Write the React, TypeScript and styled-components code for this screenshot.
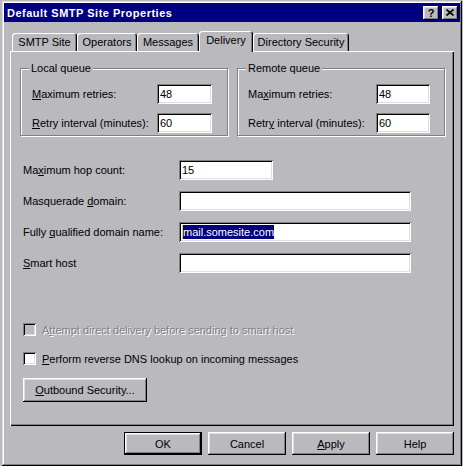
import styled, { createGlobalStyle } from "styled-components";

const face = "#bab9be";
const shadow = "#808080";
const light = "#dfdfdf";

const GlobalStyle = createGlobalStyle`
  html, body {
    margin: 0;
    padding: 0;
    background: ${face};
    overflow: hidden;
  }
  body {
    font-family: "Liberation Sans", Arial, sans-serif;
    font-size: 11px;
    color: #000;
  }
`;

const raised = `inset -1px -1px #000, inset 1px 1px #fff, inset -2px -2px ${shadow}, inset 2px 2px ${light}`;
const sunken = `inset 1px 1px ${shadow}, inset -1px -1px #fff, inset 2px 2px #000, inset -2px -2px ${light}`;

const Window = styled.div`
  box-sizing: border-box;
  margin: 1px 0 0 2px;
  width: 460px;
  height: 465px;
  padding: 2px;
  background: ${face};
  box-shadow: inset -1px -1px #000, inset 1px 1px ${light}, inset -2px -2px ${shadow}, inset 2px 2px #fff;
  display: flex;
  flex-direction: column;
`;

const TitleBar = styled.div`
  height: 19px;
  background: #000080;
  padding: 0 2px 0 3px;
  display: flex;
  align-items: center;
  justify-content: space-between;
`;

const TitleText = styled.span`
  color: #fff;
  font-weight: bold;
  font-size: 11px;
  letter-spacing: 0.5px;
`;

const TitleButtons = styled.div`
  display: flex;
  gap: 3px;
`;

const TitleButton = styled.div`
  box-sizing: border-box;
  width: 16px;
  height: 14px;
  background: ${face};
  box-shadow: ${raised};
  display: flex;
  align-items: center;
  justify-content: center;
  font-weight: bold;
  font-size: 11px;
  line-height: 14px;
`;

const Body = styled.div`
  padding: 9px 6px 0 6px;
  display: flex;
  flex-direction: column;
`;

const TabStrip = styled.div`
  height: 20px;
  padding-left: 2px;
  display: flex;
  align-items: flex-end;
  position: relative;
  z-index: 1;
`;

const Tab = styled.div<{ $active?: boolean; $w: number }>`
  box-sizing: border-box;
  width: ${(p) => p.$w}px;
  height: ${(p) => (p.$active ? 21 : 18)}px;
  margin-bottom: ${(p) => (p.$active ? -1 : 0)}px;
  padding-bottom: ${(p) => (p.$active ? 3 : 0)}px;
  background: ${face};
  border-top-left-radius: 3px;
  border-top-right-radius: 3px;
  box-shadow: inset 1px 1px #fff, inset -1px 0 #000, inset -2px 0 ${shadow};
  display: flex;
  align-items: center;
  justify-content: center;
  white-space: nowrap;
`;

const Panel = styled.div`
  box-sizing: border-box;
  height: 375px;
  padding: 17px 8px 0 10px;
  background: ${face};
  box-shadow: inset 1px 1px #fff, inset -1px -1px #000, inset -2px -2px ${shadow};
  display: flex;
  flex-direction: column;
`;

const GroupRow = styled.div`
  display: flex;
  gap: 9px;
`;

const Group = styled.div<{ $pad: number }>`
  box-sizing: border-box;
  position: relative;
  width: 208px;
  height: 68px;
  border: 1px solid ${shadow};
  box-shadow: inset 1px 1px #fff, 1px 1px #fff;
  padding: 15px 0 2px ${(p) => p.$pad}px;
`;

const Legend = styled.span`
  position: absolute;
  top: -7px;
  left: 8px;
  padding: 0 2px;
  line-height: 13px;
  background: ${face};
`;

const FieldGrid = styled.div<{ $label: number; $input: number }>`
  display: grid;
  grid-template-columns: ${(p) => p.$label}px ${(p) => p.$input}px;
  grid-auto-rows: 20px;
  row-gap: 9px;
  align-items: center;
`;

const FormGrid = styled.div`
  margin-top: 24px;
  padding-left: 3px;
  display: grid;
  grid-template-columns: 156px auto;
  grid-auto-rows: 20px;
  row-gap: 11px;
  align-items: center;
`;

const Label = styled.span`
  white-space: nowrap;
`;

const Field = styled.div<{ $w: number }>`
  box-sizing: border-box;
  width: ${(p) => p.$w}px;
  height: 20px;
  padding: 0 3px;
  background: #fff;
  box-shadow: ${sunken};
  display: flex;
  align-items: center;
  white-space: nowrap;
`;

const Selected = styled.span`
  background: #000080;
  color: #fff;
  line-height: 14px;
  border-left: 1px solid #e8e000;
`;

const CheckRow = styled.div<{ $top: number; $disabled?: boolean }>`
  margin-top: ${(p) => p.$top}px;
  padding-left: 3px;
  height: 13px;
  display: flex;
  align-items: center;
  gap: 6px;
  color: ${(p) => (p.$disabled ? shadow : "#000")};
  text-shadow: ${(p) => (p.$disabled ? "1px 1px #fff" : "none")};
  white-space: nowrap;
`;

const CheckBox = styled.span<{ $disabled?: boolean }>`
  box-sizing: border-box;
  width: 13px;
  height: 13px;
  flex: none;
  background: ${(p) => (p.$disabled ? face : "#fff")};
  box-shadow: ${sunken};
`;

const Button = styled.button<{ $w: number; $h?: number; $default?: boolean }>`
  box-sizing: border-box;
  width: ${(p) => p.$w}px;
  height: ${(p) => p.$h ?? 23}px;
  padding: 0;
  margin: 0;
  font-family: "Liberation Sans", Arial, sans-serif;
  font-size: 11px;
  color: #000;
  background: ${face};
  border: ${(p) => (p.$default ? "1px solid #000" : "none")};
  box-shadow: ${raised};
  display: flex;
  align-items: center;
  justify-content: center;
`;

const OutboundButton = styled(Button)`
  margin-top: 13px;
  margin-left: 3px;
`;

const ButtonRow = styled.div`
  margin-top: 6px;
  display: flex;
  justify-content: flex-end;
  gap: 6px;
`;

function CloseIcon() {
  return (
    <svg width="8" height="7" viewBox="0 0 8 7">
      <path d="M0.5 0.5 L7.5 6.5 M7.5 0.5 L0.5 6.5" stroke="#000" strokeWidth="1.6" />
    </svg>
  );
}

export default function App() {
  return (
    <>
      <GlobalStyle />
      <Window>
        <TitleBar>
          <TitleText>Default SMTP Site Properties</TitleText>
          <TitleButtons>
            <TitleButton>?</TitleButton>
            <TitleButton>
              <CloseIcon />
            </TitleButton>
          </TitleButtons>
        </TitleBar>
        <Body>
          <TabStrip>
            <Tab $w={65}>SMTP Site</Tab>
            <Tab $w={60}>Operators</Tab>
            <Tab $w={62}>Messages</Tab>
            <Tab $w={54} $active>
              Delivery
            </Tab>
            <Tab $w={96}>Directory Security</Tab>
          </TabStrip>
          <Panel>
            <GroupRow>
              <Group $pad={11}>
                <Legend>Local queue</Legend>
                <FieldGrid $label={125} $input={55}>
                  <Label>
                    <u>M</u>aximum retries:
                  </Label>
                  <Field $w={55}>48</Field>
                  <Label>
                    <u>R</u>etry interval (minutes):
                  </Label>
                  <Field $w={55}>60</Field>
                </FieldGrid>
              </Group>
              <Group $pad={10}>
                <Legend>Remote queue</Legend>
                <FieldGrid $label={128} $input={54}>
                  <Label>
                    Ma<u>x</u>imum retries:
                  </Label>
                  <Field $w={54}>48</Field>
                  <Label>
                    Retr<u>y</u> interval (minutes):
                  </Label>
                  <Field $w={54}>60</Field>
                </FieldGrid>
              </Group>
            </GroupRow>
            <FormGrid>
              <Label>
                Ma<u>x</u>imum hop count:
              </Label>
              <Field $w={94}>15</Field>
              <Label>
                Masquerade <u>d</u>omain:
              </Label>
              <Field $w={232} />
              <Label>
                Fully <u>q</u>ualified domain name:
              </Label>
              <Field $w={232}>
                <Selected>mail.somesite.com</Selected>
              </Field>
              <Label>
                <u>S</u>mart host
              </Label>
              <Field $w={232} />
            </FormGrid>
            <CheckRow $top={50} $disabled>
              <CheckBox $disabled />
              <span>
                A<u>t</u>tempt direct delivery before sending to smart host
              </span>
            </CheckRow>
            <CheckRow $top={16}>
              <CheckBox />
              <span>
                <u>P</u>erform reverse DNS lookup on incoming messages
              </span>
            </CheckRow>
            <OutboundButton $w={124} $h={24}>
              <u>O</u>utbound Security...
            </OutboundButton>
          </Panel>
          <ButtonRow>
            <Button $w={78} $default>
              OK
            </Button>
            <Button $w={78}>Cancel</Button>
            <Button $w={78}>
              <u>A</u>pply
            </Button>
            <Button $w={78}>Help</Button>
          </ButtonRow>
        </Body>
      </Window>
    </>
  );
}
